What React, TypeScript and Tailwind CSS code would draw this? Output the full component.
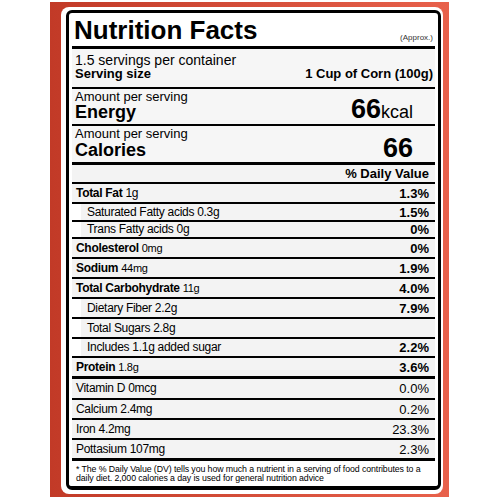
type Nutrient = {
  label: string;
  amount: string;
  dv: string;
  bold?: boolean;
  indent?: boolean;
  small?: boolean;
  rowClass: string;
};

// row heights are taken from the label, lines included
const nutrients: Nutrient[] = [
  { label: "Total Fat", amount: "1g", dv: "1.3%", bold: true, rowClass: "h-[20px] border-b-2" },
  { label: "Saturated Fatty acids", amount: "0.3g", dv: "1.5%", indent: true, rowClass: "h-[18px] border-b-2" },
  { label: "Trans Fatty acids", amount: "0g", dv: "0%", indent: true, rowClass: "h-[17px] border-b-2" },
  { label: "Cholesterol", amount: "0mg", dv: "0%", bold: true, small: true, rowClass: "h-[20px] border-b-2" },
  { label: "Sodium", amount: "44mg", dv: "1.9%", bold: true, small: true, rowClass: "h-[20px] border-b-2" },
  { label: "Total Carbohydrate", amount: "11g", dv: "4.0%", bold: true, small: true, rowClass: "h-[20px] border-b-2" },
  { label: "Dietary Fiber", amount: "2.2g", dv: "7.9%", indent: true, rowClass: "h-[20px] border-b-2" },
  { label: "Total Sugars", amount: "2.8g", dv: "", indent: true, rowClass: "h-[20px] border-b-2" },
  { label: "Includes", amount: "1.1g added sugar", dv: "2.2%", indent: true, rowClass: "h-[19px] border-b-2" },
  { label: "Protein", amount: "1.8g", dv: "3.6%", bold: true, small: true, rowClass: "h-[21px] border-b-[3px]" },
];

const minerals = [
  { label: "Vitamin D 0mcg", dv: "0.0%", rowClass: "h-[21px] border-b-2" },
  { label: "Calcium 2.4mg", dv: "0.2%", rowClass: "h-[20px] border-b-2" },
  { label: "Iron 4.2mg", dv: "23.3%", rowClass: "h-[20px] border-b-2" },
  { label: "Pottasium 107mg", dv: "2.3%", rowClass: "h-[21px] border-b-[3px]" },
];

function NutrientRow({ n }: { n: Nutrient }) {
  return (
    <div className={`${n.rowClass} border-black flex flex-col overflow-hidden`}>
      <div
        className={`flex-1 flex items-center justify-between bg-[#f3f3f3] pr-[6px] leading-[15px] ${
          n.indent ? "ml-[9px] pl-[6px]" : "pl-[4px]"
        }`}
      >
        <span className="text-[12px] tracking-[-0.3px]">
          {n.bold ? <span className="font-bold">{n.label}</span> : n.label}{" "}
          <span className={n.small ? "text-[11px]" : ""}>{n.amount}</span>
        </span>
        <span className="text-[13px] font-bold">{n.dv}</span>
      </div>
    </div>
  );
}

export default function App() {
  return (
    <div className="min-h-[500px] bg-white pl-[50px] pt-[2px] font-['Liberation_Sans',Arial,sans-serif] text-black">
      <div className="w-[399px] h-[495px] bg-linear-to-r from-[#c23a27] to-[#e8614b] pl-[11px] pt-[5px] pr-[6px] pb-[3px]">
        <div className="h-full bg-white rounded-[8px] pl-[5px] pt-[3px] pr-[2px] pb-[4px]">
          <div className="h-full flex flex-col border-[3px] border-b-[4px] border-black rounded-[6px] px-[3px]">
            {/* title */}
            <div className="flex items-end justify-between border-b-[3px] border-black pt-[3px] pb-[2px] pl-[2px] pr-[2px]">
              <h1 className="text-[26px] leading-[28px] font-bold">Nutrition Facts</h1>
              <span className="text-[8px] leading-[9px] mb-[2px] text-[#333]">(Approx.)</span>
            </div>

            {/* serving */}
            <div className="border-b-2 border-black bg-[#f6f6f6] pt-[4px] pb-[6px] pl-[3px] pr-[2px]">
              <div className="text-[14px] leading-[14px]">1.5 servings per container</div>
              <div className="flex justify-between text-[13px] leading-[14px] font-bold">
                <span>Serving size</span>
                <span>1 Cup of Corn (100g)</span>
              </div>
            </div>

            {/* energy */}
            <div className="flex items-end justify-between border-b-2 border-black bg-[#f6f6f6] pt-[1px] pb-[3px] pl-[3px] pr-[22px]">
              <div>
                <div className="text-[13px] leading-[14px]">Amount per serving</div>
                <div className="text-[18px] leading-[17px] font-bold">Energy</div>
              </div>
              <div className="flex items-baseline leading-[18px]">
                <span className="text-[27px] font-bold">66</span>
                <span className="text-[18px]">kcal</span>
              </div>
            </div>

            {/* calories */}
            <div className="flex items-end justify-between border-b-[3px] border-black bg-[#f6f6f6] pt-[1px] pb-[3px] pl-[3px] pr-[22px]">
              <div>
                <div className="text-[13px] leading-[14px]">Amount per serving</div>
                <div className="mt-[1px] text-[18px] leading-[17px] font-bold">Calories</div>
              </div>
              <div className="mb-[2px] text-[27px] leading-[18px] font-bold">66</div>
            </div>

            <div className="h-[19px] border-b-2 border-black bg-[#f3f3f3] pr-[6px] text-right text-[13px] leading-[17px] font-bold">
              % Daily Value
            </div>

            {nutrients.map((n) => (
              <NutrientRow key={n.label} n={n} />
            ))}

            {minerals.map((m) => (
              <div key={m.label} className={`${m.rowClass} border-black flex flex-col overflow-hidden`}>
                <div className="flex-1 flex items-center justify-between bg-[#f3f3f3] pl-[4px] pr-[6px] leading-[15px]">
                  <span className="text-[12px] tracking-[-0.3px]">{m.label}</span>
                  <span className="text-[13px]">{m.dv}</span>
                </div>
              </div>
            ))}

            {/* footnote */}
            <div className="flex-1 pt-[4px] pl-[4px] text-[8.8px] leading-[8.5px] tracking-[-0.1px] whitespace-nowrap">
              <div>* The % Daily Value (DV) tells you how much a nutrient in a serving of food contributes to a</div>
              <div>daily diet. 2,000 calories a day is used for general nutrition advice</div>
            </div>
          </div>
        </div>
      </div>
    </div>
  );
}
